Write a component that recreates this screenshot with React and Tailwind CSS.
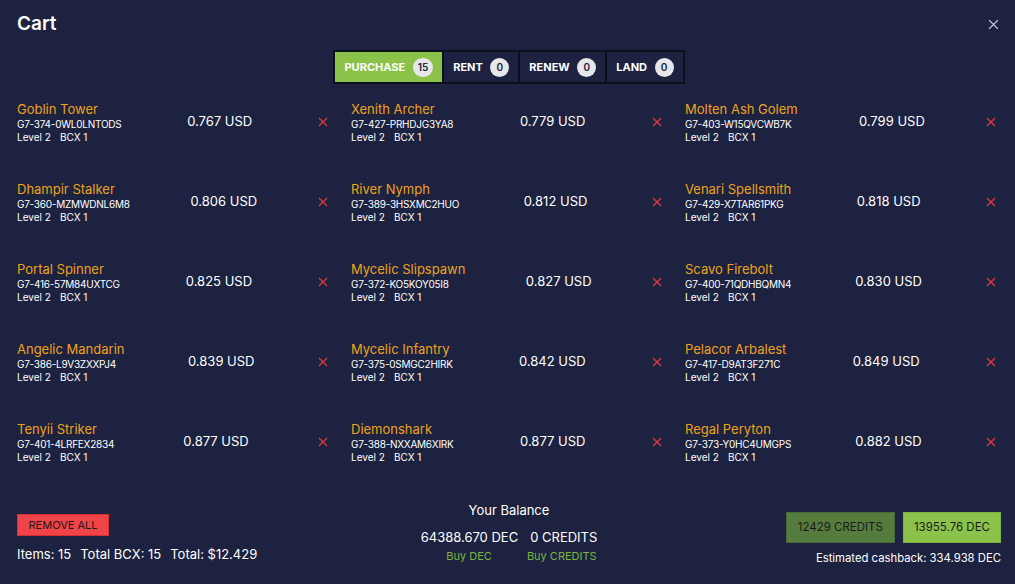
import React from "react";

const items = [
  ["Goblin Tower", "G7-374-0WL0LNTODS", "0.767"],
  ["Xenith Archer", "G7-427-PRHDJG3YA8", "0.779"],
  ["Molten Ash Golem", "G7-403-W15QVCWB7K", "0.799"],
  ["Dhampir Stalker", "G7-360-MZMWDNL6M8", "0.806"],
  ["River Nymph", "G7-389-3HSXMC2HUO", "0.812"],
  ["Venari Spellsmith", "G7-429-X7TAR61PKG", "0.818"],
  ["Portal Spinner", "G7-416-57M84UXTCG", "0.825"],
  ["Mycelic Slipspawn", "G7-372-KO5KOY05I8", "0.827"],
  ["Scavo Firebolt", "G7-400-71QDHBQMN4", "0.830"],
  ["Angelic Mandarin", "G7-386-L9V3ZXXPJ4", "0.839"],
  ["Mycelic Infantry", "G7-375-0SMGC2HIRK", "0.842"],
  ["Pelacor Arbalest", "G7-417-D9AT3F271C", "0.849"],
  ["Tenyii Striker", "G7-401-4LRFEX2834", "0.877"],
  ["Diemonshark", "G7-388-NXXAM6XIRK", "0.877"],
  ["Regal Peryton", "G7-373-Y0HC4UMGPS", "0.882"],
];

function XIcon({ className, size = 10 }) {
  return (
    <svg width={size} height={size} viewBox="0 0 10 10" className={className}>
      <path d="M1 1L9 9M9 1L1 9" stroke="currentColor" strokeWidth="1.2" />
    </svg>
  );
}

function Tab({ label, count, active }) {
  return (
    <div
      className={`flex items-center gap-[7.5px] h-[34px] px-[9px] border-[2px] border-[#0c0f1c] -ml-[2px] first:ml-0 text-[11px] font-bold ${
        active ? "bg-[#8bc34a] text-white" : "text-white"
      }`}
    >
      <span>{label}</span>
      <span className="flex items-center justify-center min-w-[19px] h-[19px] px-[5px] rounded-full bg-[#e5e7eb] text-[#1c2240] text-[10px] font-semibold">
        {count}
      </span>
    </div>
  );
}

export default function App() {
  return (
    <div
      className="w-[1015px] h-[584px] bg-[#1c2240] text-white flex flex-col overflow-hidden"
      style={{ fontFamily: "Inter, 'Noto Sans', sans-serif" }}
    >
      <div className="flex items-center justify-between px-[17px] pt-[9px] h-[40px]">
        <div className="text-[19px] font-semibold">Cart</div>
        <XIcon className="text-[#c9cfdd] -mr-[1px]" size={11} />
      </div>

      <div className="flex justify-center mt-[10px] pl-[3px]">
        <Tab label="PURCHASE" count="15" active />
        <Tab label="RENT" count="0" />
        <Tab label="RENEW" count="0" />
        <Tab label="LAND" count="0" />
      </div>

      <div className="grid grid-cols-3 gap-x-[21px] gap-y-[37px] px-[17px] mt-[17px]">
        {items.map(([name, id, price]) => (
          <div key={id} className="flex items-center justify-between h-[43px]">
            <div className="flex flex-col">
              <div className="text-[13px] leading-[16px] text-[#eea21c]">{name}</div>
              <div className="text-[10px] leading-[13px] mt-[1px] tracking-[-0.25px]">{id}</div>
              <div className="text-[10px] leading-[13px] flex gap-[9px]">
                <span>Level 2</span>
                <span>BCX 1</span>
              </div>
            </div>
            <div className="text-[13px] mb-[1px]">{price} USD</div>
            <XIcon className="text-[#e53940] mr-[2px] mb-[1px]" size={10} />
          </div>
        ))}
      </div>

      <div className="flex justify-between items-start px-[17px] mt-[37px]">
        <div className="flex flex-col w-[300px] pt-[13px]">
          <div className="w-[92px] h-[22px] bg-[#f04448] border border-[#d32f2f] text-[#1a1a1a] text-[11px] flex items-center justify-center">
            REMOVE ALL
          </div>
          <div className="text-[13px] mt-[9px] flex gap-[9px]">
            <span>Items: 15</span>
            <span>Total BCX: 15</span>
            <span>Total: $12.429</span>
          </div>
        </div>

        <div className="flex flex-col items-center">
          <div className="text-[13px]">Your Balance</div>
          <div className="text-[13px] mt-[7px] flex gap-[12px]">
            <span>64388.670 DEC</span>
            <span>0 CREDITS</span>
          </div>
          <div className="text-[11px] text-[#7cb342] mt-[1px] flex gap-[35px] pl-[25px]">
            <span>Buy DEC</span>
            <span>Buy CREDITS</span>
          </div>
        </div>

        <div className="flex flex-col items-end w-[300px] pt-[11px] -mr-[3px]">
          <div className="flex gap-[8px]">
            <div className="h-[31px] px-[11px] bg-[#567c3d] border border-[#49693a] text-[#1a1a1a] text-[11.5px] flex items-center">
              12429 CREDITS
            </div>
            <div className="h-[31px] px-[10px] bg-[#8bc34a] border border-[#7cb342] text-[#1a1a1a] text-[11.5px] flex items-center">
              13955.76 DEC
            </div>
          </div>
          <div className="text-[11.3px] mt-[7px]">Estimated cashback: 334.938 DEC</div>
        </div>
      </div>
    </div>
  );
}
